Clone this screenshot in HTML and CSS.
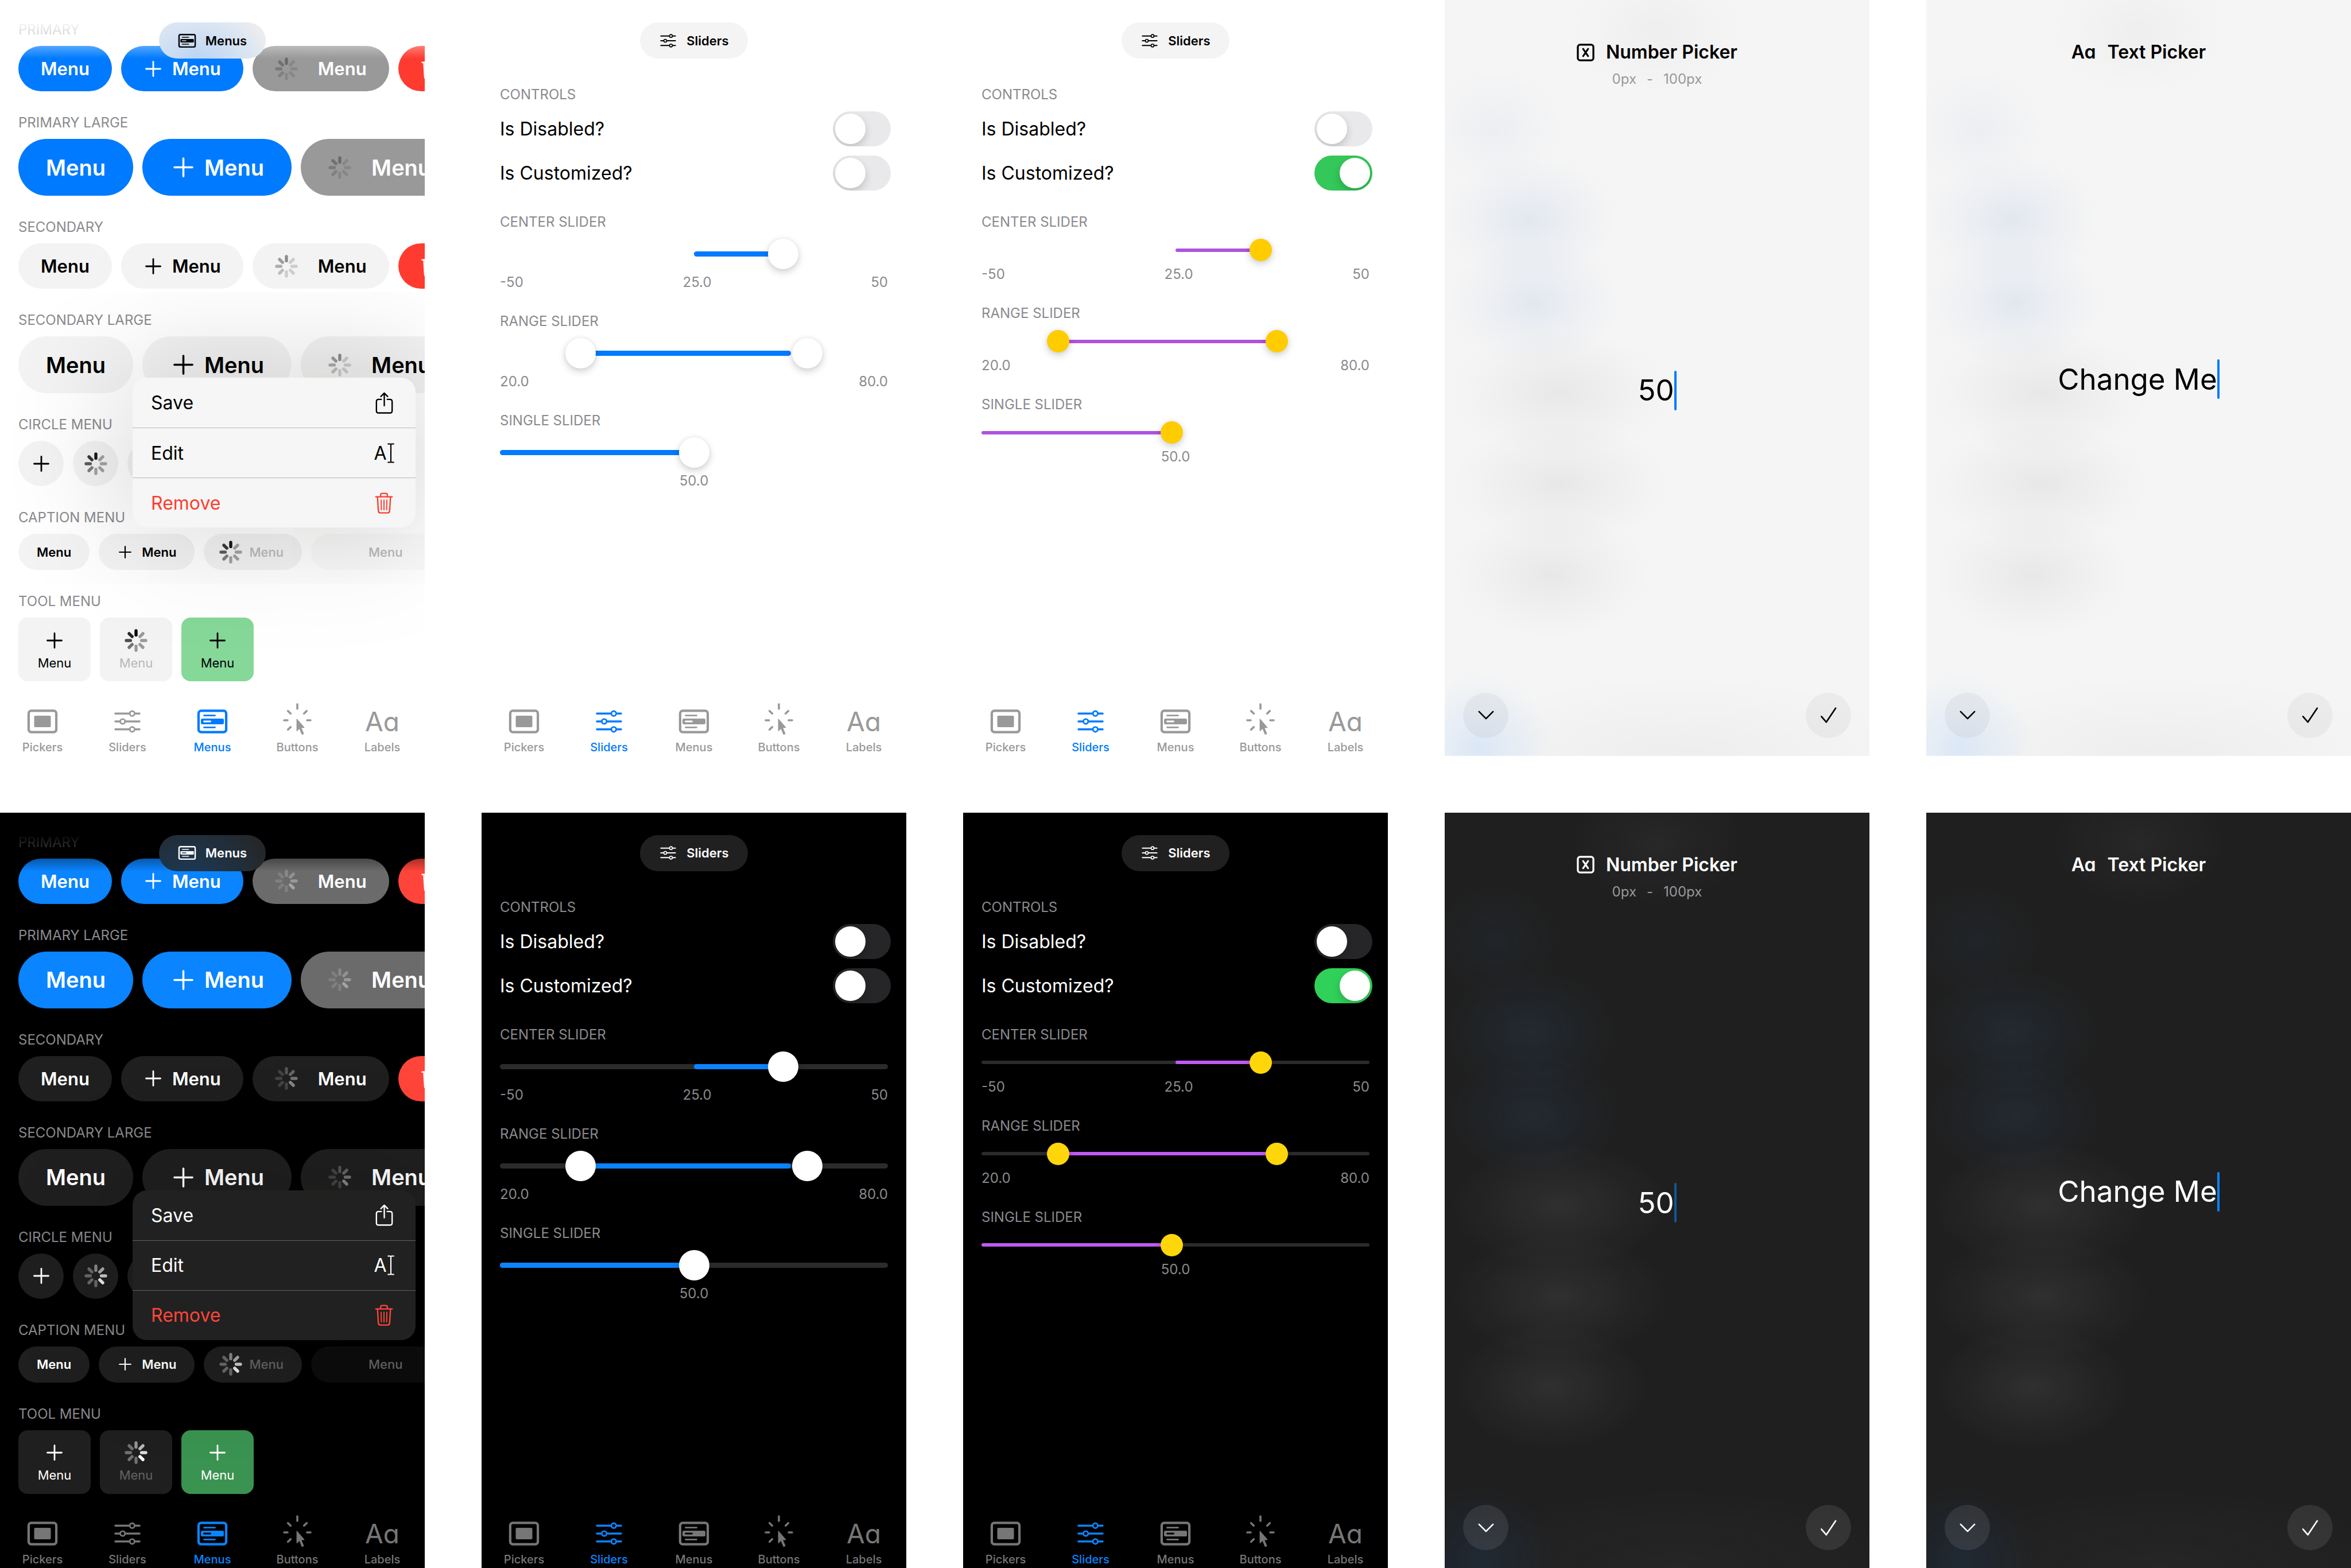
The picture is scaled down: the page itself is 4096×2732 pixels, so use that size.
FILE: index.html
```html
<!DOCTYPE html>
<html lang="en">
<head>
<meta charset="utf-8">
<meta name="viewport" content="width=device-width, initial-scale=1">
<title>Component gallery</title>
<link rel="stylesheet" href="styles.css">
</head>
<body>

<svg class="sprite" aria-hidden="true">
  <symbol id="plus" viewBox="0 0 28 28">
    <path d="M14 1.5v25M1.5 14h25" fill="none" stroke="currentColor" stroke-width="2.8" stroke-linecap="round"/>
  </symbol>
  <symbol id="spinner" viewBox="0 0 40 40">
    <g stroke="currentColor" stroke-width="5.4" stroke-linecap="round">
      <path d="M20 3v7.4"/>
      <path d="M20 3v7.4" transform="rotate(-45 20 20)" opacity=".84"/>
      <path d="M20 3v7.4" transform="rotate(-90 20 20)" opacity=".68"/>
      <path d="M20 3v7.4" transform="rotate(-135 20 20)" opacity=".52"/>
      <path d="M20 3v7.4" transform="rotate(180 20 20)" opacity=".36"/>
      <path d="M20 3v7.4" transform="rotate(135 20 20)" opacity=".36"/>
      <path d="M20 3v7.4" transform="rotate(90 20 20)" opacity=".36"/>
      <path d="M20 3v7.4" transform="rotate(45 20 20)" opacity=".36"/>
    </g>
  </symbol>
  <symbol id="trash" viewBox="0 0 32 38">
    <g fill="none" stroke="currentColor" stroke-width="2.4" stroke-linecap="round" stroke-linejoin="round">
      <path d="M1.4 7.800h29.200"/>
      <path d="M10 7.600V4.600Q10 1.600 13 1.600h6Q22 1.600 22 4.600V7.600"/>
      <path d="M4.400 8L5.900 33Q6.100 36.600 9.600 36.600H22.400Q25.900 36.600 26.100 33L27.600 8"/>
      <path d="M10.800 13.500L11.300 31M16 13.500V31M21.200 13.500L20.700 31" stroke-width="2"/>
    </g>
  </symbol>
  <symbol id="share" viewBox="0 0 32 40">
    <g fill="none" stroke="currentColor" stroke-width="2.5" stroke-linecap="round" stroke-linejoin="round">
      <path d="M10.500 13.600H5.600q-4 0-4 4v16.800q0 4 4 4h20.800q4 0 4-4V17.600q0-4-4-4h-4.900"/>
      <path d="M16 25V2M9.800 8.200L16 2l6.200 6.200"/>
    </g>
  </symbol>
  <symbol id="ibeam" viewBox="0 0 12 36">
    <path d="M1 1.500h3.500q1.500 0 1.500 1.500v30q0 1.500-1.500 1.500H1M11 1.500H7.500Q6 1.500 6 3M6 33q0 1.500 1.500 1.500H11" fill="none" stroke="currentColor" stroke-width="2.200" stroke-linecap="round"/>
  </symbol>
  <symbol id="pickers" viewBox="0 0 54 48">
    <rect x="2.900" y="5.400" width="48.200" height="37.200" rx="4.500" fill="none" stroke="currentColor" stroke-width="4.200"/>
    <rect x="12.500" y="14" width="29" height="20" rx="2" fill="currentColor"/>
  </symbol>
  <symbol id="sliders" viewBox="0 0 46 40">
    <g fill="none" stroke="currentColor" stroke-width="3.600" stroke-linecap="round">
      <path d="M2 6.200h24.600M36 6.200h8M2 20h8M19.400 20H44M2 33.800h24.600M36 33.800h8"/>
      <circle cx="31.300" cy="6.200" r="4.200" stroke-width="2.800"/>
      <circle cx="14.700" cy="20" r="4.200" stroke-width="2.800"/>
      <circle cx="31.300" cy="33.800" r="4.200" stroke-width="2.800"/>
    </g>
  </symbol>
  <symbol id="menus" viewBox="0 0 54 48">
    <rect class="menus-frame" x="2.900" y="5.400" width="48.200" height="37.200" rx="4.500" fill="none" stroke="currentColor" stroke-width="4.200"/>
    <path class="menus-frame" d="M12.500 13.700h19M12.500 34.300h19" stroke="currentColor" stroke-width="2.800" stroke-linecap="round"/>
    <path fill-rule="evenodd" fill="currentColor" d="M9.500 19h35q2.500 0 2.500 2.500v5q0 2.500-2.500 2.500h-35Q7 29 7 26.500v-5Q7 19 9.500 19zM12.500 22.600a1.400 1.400 0 0 0 0 2.800h11a1.400 1.400 0 0 0 0-2.800z"/>
  </symbol>
  <symbol id="buttons" viewBox="0 0 50 48">
    <path d="M25 -6v8M2 22h6M42 22h6M8.700 5.700l4.600 4.600M41.300 5.700l-4.600 4.600M8.700 38.300l4.600-4.600" fill="none" stroke="currentColor" stroke-width="3.600" stroke-linecap="round"/>
    <path d="M23.600 20.200q0-1.600 1.200-.5l12.300 14.200q1.100 1.200-.5 1.300l-4.300.2 4 9.300q.4 1.100-.6 1.600l-1.800.7q-1 .4-1.500-.7l-3.800-9.300-3.600 3.500q-1.400 1.200-1.400-.4z" fill="currentColor"/>
  </symbol>
  <symbol id="number" viewBox="0 0 32 32">
    <rect x="2" y="2" width="28" height="28" rx="4" fill="none" stroke="currentColor" stroke-width="3.400"/>
    <path d="M11.500 9.500l9 13M20.500 9.500l-9 13" stroke="currentColor" stroke-width="3.200" stroke-linecap="round"/>
  </symbol>
  <symbol id="chevron" viewBox="0 0 32 32">
    <path d="M3 9.500L16 22.500 29 9.500" fill="none" stroke="currentColor" stroke-width="2.800" stroke-linecap="round" stroke-linejoin="round"/>
  </symbol>
  <symbol id="check" viewBox="0 0 32 32">
    <path d="M2.500 18.500L11.500 29 29 3" fill="none" stroke="currentColor" stroke-width="2.800" stroke-linecap="round" stroke-linejoin="round"/>
  </symbol>
</svg>

<main class="board"></main>

<!-- Five screens; gallery.js places one set per theme. -->
<template id="screens">
  <article class="phone phone-menus" data-tab="menus">
    <header class="nav">
      <h2 class="nav-title"><svg class="nav-icon"><use href="#menus"/></svg>Menus</h2>
    </header>
    <div class="content">
      <section class="group">
        <h3 class="caption">PRIMARY</h3>
        <div class="row">
          <button class="btn primary">Menu</button>
          <button class="btn primary"><span class="glyph"><svg><use href="#plus"/></svg></span>Menu</button>
          <button class="btn primary loading"><svg class="spinner"><use href="#spinner"/></svg>Menu</button>
          <button class="btn danger" aria-label="Menu"><span class="glyph"><svg><use href="#trash"/></svg></span></button>
        </div>
      </section>
      <section class="group">
        <h3 class="caption">PRIMARY LARGE</h3>
        <div class="row">
          <button class="btn large primary">Menu</button>
          <button class="btn large primary"><span class="glyph"><svg><use href="#plus"/></svg></span>Menu</button>
          <button class="btn large primary loading"><svg class="spinner"><use href="#spinner"/></svg>Menu</button>
        </div>
      </section>
      <section class="group">
        <h3 class="caption">SECONDARY</h3>
        <div class="row">
          <button class="btn">Menu</button>
          <button class="btn"><span class="glyph"><svg><use href="#plus"/></svg></span>Menu</button>
          <button class="btn loading"><svg class="spinner"><use href="#spinner"/></svg>Menu</button>
          <button class="btn danger" aria-label="Menu"><span class="glyph"><svg><use href="#trash"/></svg></span></button>
        </div>
      </section>
      <section class="group">
        <h3 class="caption">SECONDARY LARGE</h3>
        <div class="row">
          <button class="btn large">Menu</button>
          <button class="btn large"><span class="glyph"><svg><use href="#plus"/></svg></span>Menu</button>
          <button class="btn large loading"><svg class="spinner"><use href="#spinner"/></svg>Menu</button>
        </div>
      </section>
      <section class="group">
        <h3 class="caption">CIRCLE MENU</h3>
        <div class="row">
          <button class="btn circle" aria-label="Menu"><span class="glyph"><svg><use href="#plus"/></svg></span></button>
          <button class="btn circle" aria-label="Loading"><svg class="spinner"><use href="#spinner"/></svg></button>
          <button class="btn circle" aria-label="Menu"></button>
        </div>
      </section>
      <section class="group">
        <h3 class="caption">CAPTION MENU</h3>
        <div class="row">
          <button class="btn small">Menu</button>
          <button class="btn small"><span class="glyph"><svg><use href="#plus"/></svg></span>Menu</button>
          <button class="btn small loading muted"><svg class="spinner"><use href="#spinner"/></svg><span>Menu</span></button>
          <button class="btn small faint muted"><span>Menu</span></button>
        </div>
      </section>
      <section class="group">
        <h3 class="caption">TOOL MENU</h3>
        <div class="row">
          <button class="tool"><span class="glyph"><svg><use href="#plus"/></svg></span>Menu</button>
          <button class="tool muted"><svg class="spinner"><use href="#spinner"/></svg><span>Menu</span></button>
          <button class="tool active"><span class="glyph"><svg><use href="#plus"/></svg></span>Menu</button>
        </div>
      </section>
    </div>
    <div class="popup" role="menu">
      <button class="popup-item" role="menuitem">Save<span class="popup-icon"><svg class="icon-share"><use href="#share"/></svg></span></button>
      <button class="popup-item" role="menuitem">Edit<span class="popup-icon">A<svg class="icon-ibeam"><use href="#ibeam"/></svg></span></button>
      <button class="popup-item remove" role="menuitem">Remove<span class="popup-icon"><svg class="icon-trash"><use href="#trash"/></svg></span></button>
    </div>
  </article>

  <article class="phone" data-tab="sliders">
    <header class="nav">
      <h2 class="nav-title"><svg class="nav-icon"><use href="#sliders"/></svg>Sliders</h2>
    </header>
    <div class="content content-sliders">
      <section class="group">
        <h3 class="caption">CONTROLS</h3>
        <label class="setting">Is Disabled?<input class="toggle" type="checkbox"></label>
        <label class="setting">Is Customized?<input class="toggle" type="checkbox"></label>
      </section>
      <section class="group">
        <h3 class="caption">CENTER SLIDER</h3>
        <div class="slider">
          <span class="fill fill-center"></span>
          <input type="range" min="-50" max="50" value="25" aria-label="Center slider">
        </div>
        <div class="values"><output>-50</output><output>25.0</output><output>50</output></div>
      </section>
      <section class="group">
        <h3 class="caption">RANGE SLIDER</h3>
        <div class="slider slider-range">
          <span class="fill fill-range"></span>
          <input type="range" value="20" aria-label="Range start">
          <input class="upper" type="range" value="80" aria-label="Range end">
        </div>
        <div class="values"><output>20.0</output><output>80.0</output></div>
      </section>
      <section class="group">
        <h3 class="caption">SINGLE SLIDER</h3>
        <div class="slider">
          <span class="fill fill-single"></span>
          <input type="range" value="50" aria-label="Single slider">
        </div>
        <div class="values values-single"><output>50.0</output></div>
      </section>
    </div>
  </article>

  <article class="phone" data-tab="sliders">
    <header class="nav">
      <h2 class="nav-title"><svg class="nav-icon"><use href="#sliders"/></svg>Sliders</h2>
    </header>
    <div class="content content-sliders customized">
      <section class="group">
        <h3 class="caption">CONTROLS</h3>
        <label class="setting">Is Disabled?<input class="toggle" type="checkbox"></label>
        <label class="setting">Is Customized?<input class="toggle" type="checkbox" checked></label>
      </section>
      <section class="group">
        <h3 class="caption">CENTER SLIDER</h3>
        <div class="slider">
          <span class="fill fill-center"></span>
          <input type="range" min="-50" max="50" value="25" aria-label="Center slider">
        </div>
        <div class="values"><output>-50</output><output>25.0</output><output>50</output></div>
      </section>
      <section class="group">
        <h3 class="caption">RANGE SLIDER</h3>
        <div class="slider slider-range">
          <span class="fill fill-range"></span>
          <input type="range" value="20" aria-label="Range start">
          <input class="upper" type="range" value="80" aria-label="Range end">
        </div>
        <div class="values"><output>20.0</output><output>80.0</output></div>
      </section>
      <section class="group">
        <h3 class="caption">SINGLE SLIDER</h3>
        <div class="slider">
          <span class="fill fill-single"></span>
          <input type="range" value="50" aria-label="Single slider">
        </div>
        <div class="values values-single"><output>50.0</output></div>
      </section>
    </div>
  </article>

  <article class="phone picker">
    <header class="picker-head">
      <h2 class="picker-title"><svg class="picker-icon"><use href="#number"/></svg>Number Picker</h2>
      <p class="picker-range"><span>0px</span><span>-</span><span>100px</span></p>
    </header>
    <div class="picker-field"><input class="entry" type="text" size="2" value="50" aria-label="Number"><span class="caret caret-number"></span></div>
    <footer class="picker-actions">
      <button class="round" aria-label="Dismiss"><svg><use href="#chevron"/></svg></button>
      <button class="round" aria-label="Confirm"><svg><use href="#check"/></svg></button>
    </footer>
  </article>

  <article class="phone picker">
    <header class="picker-head">
      <h2 class="picker-title"><span class="letters">Aa</span>Text Picker</h2>
    </header>
    <div class="picker-field"><input class="entry" type="text" size="9" value="Change Me" aria-label="Text"><span class="caret"></span></div>
    <footer class="picker-actions">
      <button class="round" aria-label="Dismiss"><svg><use href="#chevron"/></svg></button>
      <button class="round" aria-label="Confirm"><svg><use href="#check"/></svg></button>
    </footer>
  </article>
</template>

<template id="tabs">
  <nav class="tabs">
    <a class="tab" href="#pickers" data-name="pickers"><svg class="tab-wide"><use href="#pickers"/></svg>Pickers</a>
    <a class="tab" href="#sliders" data-name="sliders"><svg class="tab-sliders"><use href="#sliders"/></svg>Sliders</a>
    <a class="tab" href="#menus" data-name="menus"><svg class="tab-wide"><use href="#menus"/></svg>Menus</a>
    <a class="tab" href="#buttons" data-name="buttons"><svg class="tab-buttons"><use href="#buttons"/></svg>Buttons</a>
    <a class="tab" href="#labels" data-name="labels"><span class="tab-letters letters">Aa</span>Labels</a>
  </nav>
</template>

<script src="gallery.js"></script>
</body>
</html>
```
FILE: gallery.js
```js
// Renders every screen once per theme and adds the tab bar to tabbed screens.
const board = document.querySelector('.board');
const screens = document.getElementById('screens');
const tabs = document.getElementById('tabs');

for (const theme of ['light', 'dark']) {
  const set = document.createElement('section');
  set.className = `theme ${theme}`;
  set.append(screens.content.cloneNode(true));
  for (const phone of set.querySelectorAll('[data-tab]')) {
    phone.append(tabs.content.cloneNode(true));
    const current = phone.querySelector(`[data-name="${phone.dataset.tab}"]`);
    current.classList.add('current');
    current.setAttribute('aria-current', 'page');
  }
  board.append(set);
}
```
FILE: styles.css
```css
* { box-sizing: border-box; }

body {
  margin: 0;
  background: #fff;
  font-family: Inter, "Liberation Sans", sans-serif;
}

h2, h3, p { margin: 0; font-weight: inherit; }

button {
  border: 0;
  padding: 0;
  font: inherit;
  color: inherit;
  background: none;
}

svg { display: block; flex: none; overflow: visible; }

symbol { overflow: visible; }

.sprite { position: absolute; width: 0; height: 0; }

/* Themes */

.light {
  --bg: #fff;
  --bg-clear: rgba(255, 255, 255, 0);
  --text: #000;
  --label: #8a8a8e;
  --blue: #007aff;
  --red: #ff3b30;
  --green: #34c759;
  --loading: #999;
  --surface: #f3f3f3;
  --surface-faint: #fafafa;
  --muted: #b8b8b8;
  --tool-active: #86d899;
  --tab: #999;
  --nav: #f4f4f4;
  --nav-menus: radial-gradient(130px 100px at 35% 115%, #b8d3f4, #dbe6f2 75%, #ebecef);
  --popup: #f5f6f5;
  --popup-line: #b4b5b4;
  --track: transparent;
  --toggle: #e9e9eb;
  --knob-shadow: 0 5px 14px rgba(0, 0, 0, .18), 0 0 10px rgba(0, 0, 0, .06);
  --purple: #af52de;
  --yellow: #ffcc00;
  --sheet: #f5f5f5;
  --blob-blue: rgba(90, 130, 200, .12);
  --blob-blue-mid: rgba(90, 130, 200, .06);
  --blob-blue-strong: rgba(90, 165, 255, .16);
  --blob-gray: rgba(0, 0, 0, .055);
  --blob-gray-mid: rgba(0, 0, 0, .028);
  --blob-foot: rgba(0, 0, 0, .03);
  --round: rgba(0, 0, 0, .04);
  --spin-primary: rgba(0, 0, 0, .3);
  --spin-plain: rgba(0, 0, 0, .42);
  --spin-turn: 0deg;
}

.dark {
  --bg: #000;
  --bg-clear: rgba(0, 0, 0, 0);
  --text: #fff;
  --label: #8a8a8e;
  --blue: #0a84ff;
  --red: #ff453a;
  --green: #30d158;
  --loading: #6b6b6b;
  --surface: #1f1f1f;
  --surface-faint: #0c0c0c;
  --muted: #636363;
  --tool-active: #3a9350;
  --tab: #767676;
  --nav: #202020;
  --nav-menus: radial-gradient(140px 110px at 30% 110%, #1d3954, #222c35 75%, #242628);
  --popup: #212121;
  --popup-line: #606060;
  --track: #2b2b2d;
  --toggle: #262628;
  --knob-shadow: 0 4px 12px rgba(0, 0, 0, .2);
  --purple: #bf5af2;
  --yellow: #ffd60a;
  --sheet: #1f1f1f;
  --blob-blue: rgba(60, 110, 170, .13);
  --blob-blue-mid: rgba(60, 110, 170, .07);
  --blob-blue-strong: rgba(30, 80, 140, .18);
  --blob-gray: rgba(255, 255, 255, .075);
  --blob-gray-mid: rgba(255, 255, 255, .04);
  --blob-foot: rgba(255, 255, 255, .03);
  --round: rgba(255, 255, 255, .09);
  --spin-primary: rgba(255, 255, 255, .38);
  --spin-plain: rgba(255, 255, 255, .45);
  --spin-turn: 135deg;
}

/* Board */

.board {
  display: grid;
  grid-template-rows: 1fr 1fr;
  gap: 99px;
  min-height: 100vh;
}

.theme {
  display: grid;
  grid-template-columns: repeat(5, minmax(0, 1fr));
  gap: 99px;
  color: var(--text);
}

.phone {
  position: relative;
  display: flex;
  flex-direction: column;
  overflow: hidden;
  background: var(--bg);
}

/* Floating navigation title */

.nav {
  position: absolute;
  z-index: 1;
  top: 0;
  left: 0;
  right: 0;
  display: flex;
  justify-content: center;
  height: 102px;
  padding-top: 39px;
  background: linear-gradient(var(--bg) 35%, var(--bg-clear));
}

.nav-title {
  display: flex;
  align-items: center;
  gap: 16px;
  height: 63px;
  padding: 0 33px;
  border-radius: 32px;
  background: var(--nav);
  font-size: 22px;
  font-weight: 600;
}

.phone-menus .nav-title { background: var(--nav-menus); }

.nav-icon { width: 32px; height: 24px; }

.phone-menus .nav-icon { height: 28px; }

.nav .menus-frame { opacity: .6; }

/* Content groups */

.content {
  display: flex;
  flex-direction: column;
  gap: 42px;
  padding: 39px 32px 0;
}

.content-sliders { padding-top: 152px; }

.group { display: flex; flex-direction: column; gap: 15px; }

.content-sliders .group { gap: 16px; }

.caption {
  font-size: 24px;
  line-height: 26px;
  color: var(--label);
}

.row { display: flex; gap: 16px; }

/* Buttons */

.btn {
  display: flex;
  flex: none;
  align-items: center;
  justify-content: center;
  gap: 16px;
  height: 79px;
  padding: 0 39px;
  border-radius: 40px;
  background: var(--surface);
  font-size: 31px;
  font-weight: 600;
}

.btn.loading { gap: 35px; }

.btn.primary { background: var(--blue); color: #fff; }

.btn.primary.loading { background: var(--loading); }

.btn.danger { background: var(--red); color: #fff; }

.btn.large {
  height: 99px;
  padding: 0 48px;
  border-radius: 50px;
  font-size: 38px;
}

.btn.large:not(.loading) { gap: 14px; }

.btn.circle { width: 79px; padding: 0; }

.btn.small {
  height: 63px;
  padding: 0 32px;
  border-radius: 32px;
  font-size: 22px;
}

.btn.small.loading { gap: 12px; padding-left: 27px; }

.btn.faint { padding: 0 80px 0 100px; background: var(--surface-faint); }

.muted span { color: var(--muted); font-weight: 500; }

.glyph { display: flex; justify-content: center; width: 34px; }

.glyph svg { width: 28px; height: 28px; }

.danger .glyph svg { width: 32px; height: 38px; }

.large .glyph { width: 46px; }

.large .glyph svg { width: 35px; height: 35px; }

.small .glyph { width: 27px; }

.small .glyph svg { width: 22px; height: 22px; }

.spinner { width: 40px; height: 40px; transform: rotate(var(--spin-turn)); }

.btn .spinner { color: var(--spin-plain); }

.btn.primary .spinner { color: var(--spin-primary); }

.btn.circle .spinner, .btn.small .spinner { color: var(--text); opacity: .9; }

.tool {
  display: flex;
  flex-direction: column;
  align-items: center;
  justify-content: center;
  gap: 6px;
  width: 126px;
  height: 111px;
  border-radius: 16px;
  background: var(--surface);
  font-size: 22px;
  line-height: 26px;
}

.tool .glyph { align-items: center; height: 40px; }

.tool.muted span { font-weight: 400; }

.tool.active { background: var(--tool-active); }

/* Context menu */

.popup {
  position: absolute;
  top: 658px;
  right: 16px;
  width: 493px;
  border-radius: 25px;
  background: var(--popup);
  box-shadow: 0 0 200px 20px rgba(10, 10, 0, .17);
}

.popup-item {
  display: flex;
  align-items: center;
  justify-content: space-between;
  width: 100%;
  height: 87px;
  padding: 0 30px 0 32px;
  font-size: 32px;
}

.popup-item + .popup-item { border-top: 1px solid var(--popup-line); }

.popup-icon {
  display: flex;
  align-items: center;
  justify-content: center;
  gap: 1px;
  width: 50px;
}

.icon-share { width: 31px; height: 38px; }
.icon-ibeam { width: 12px; height: 35px; }
.icon-trash { width: 32px; height: 37px; }

.remove { color: var(--red); }

/* Settings */

.setting {
  display: flex;
  align-items: center;
  justify-content: space-between;
  margin-right: -5px;
  font-size: 32px;
}

.toggle {
  appearance: none;
  display: flex;
  width: 101px;
  height: 61px;
  margin: 0;
  padding: 4px;
  border-radius: 31px;
  background: var(--toggle);
  overflow: hidden;
}

.toggle::before {
  content: "";
  width: 53px;
  height: 53px;
  border-radius: 50%;
  background: #fff;
  box-shadow: 0 6px 14px rgba(0, 0, 0, .18);
}

.toggle:checked { justify-content: flex-end; background: var(--green); }

/* Sliders. A thumb travels the track less one slot per thumb. */

.content-sliders {
  --slot: 53px;
  --thumb: 53px;
  --rail: 9px;
  --tint: var(--blue);
  --knob: #fff;
}

.customized {
  --thumb: 39px;
  --rail: 6px;
  --tint: var(--purple);
  --knob: var(--yellow);
}

.slider {
  display: grid;
  align-items: center;
  height: var(--thumb);
}

.slider > * { grid-area: 1 / 1; }

.slider::before {
  content: "";
  grid-area: 1 / 1;
  height: var(--rail);
  border-radius: 5px;
  background: var(--track);
}

.fill {
  height: var(--rail);
  border-radius: 5px;
  background: var(--tint);
}

.fill-center { width: 22%; margin-left: 50%; }

.fill-range { margin: 0 25% 0 20%; }

.fill-single { width: 48%; }

.slider input {
  appearance: none;
  width: calc(100% - var(--slot) + var(--thumb));
  height: var(--thumb);
  margin: 0;
  background: none;
  pointer-events: none;
}

.slider-range input { width: calc(100% - 2 * var(--slot) + var(--thumb)); }

.slider-range .upper { margin-left: var(--thumb); }

.slider input::-webkit-slider-thumb {
  appearance: none;
  width: var(--thumb);
  height: var(--thumb);
  border-radius: 50%;
  background: var(--knob);
  box-shadow: var(--knob-shadow);
  pointer-events: auto;
}

.values {
  display: flex;
  justify-content: space-between;
  margin-top: -6px;
  font-size: 24px;
  line-height: 26px;
  color: var(--label);
}

.values-single { justify-content: center; }

/* Tab bar */

.tabs {
  display: grid;
  grid-template-columns: repeat(5, 1fr);
  margin-top: auto;
}

.tab {
  display: grid;
  grid-template-rows: 50px 24px;
  row-gap: 8px;
  place-items: center;
  padding-bottom: 3px;
  color: var(--tab);
  font-size: 20px;
  font-weight: 500;
  line-height: 24px;
  text-decoration: none;
}

.tab.current { color: var(--blue); }

.tab-wide { width: 54px; height: 48px; }
.tab-sliders { width: 46px; height: 40px; }
.tab-buttons { width: 50px; height: 48px; }
.tab-letters { font-size: 46px; font-weight: 400; line-height: 50px; }

/* Single-storey "a" */
.letters { font-feature-settings: "cv11"; }

/* Pickers */

.picker {
  background:
    radial-gradient(150px 110px at 50% 4%, var(--blob-gray-mid), transparent),
    radial-gradient(110px 100px at 12% 17%, var(--blob-blue-mid), transparent),
    radial-gradient(150px 110px at 20% 29%, var(--blob-blue), var(--blob-blue-mid) 45%, transparent),
    radial-gradient(150px 110px at 21% 40%, var(--blob-blue), var(--blob-blue-mid) 45%, transparent),
    radial-gradient(190px 110px at 27% 52%, var(--blob-gray), var(--blob-gray-mid) 45%, transparent),
    radial-gradient(190px 110px at 27% 64%, var(--blob-gray), var(--blob-gray-mid) 45%, transparent),
    radial-gradient(170px 110px at 25% 76%, var(--blob-gray), var(--blob-gray-mid) 45%, transparent),
    radial-gradient(130px 130px at 8% 99%, var(--blob-blue-strong), transparent),
    radial-gradient(420px 140px at 55% 100%, var(--blob-foot), transparent),
    var(--sheet);
}

.picker-head {
  display: flex;
  flex-direction: column;
  align-items: center;
  gap: 13px;
  padding: 70px 32px 3px;
}

.picker-title {
  display: flex;
  align-items: center;
  gap: 20px;
  font-size: 32px;
  font-weight: 600;
  line-height: 42px;
}

.picker-icon { width: 31px; height: 31px; }

.picker-range {
  display: flex;
  gap: 18px;
  font-size: 24px;
  line-height: 26px;
  color: #98989b;
}

.picker-field {
  display: flex;
  flex: 1;
  align-items: center;
  justify-content: center;
}

.entry {
  field-sizing: content;
  border: 0;
  padding: 0;
  background: none;
  font: 400 51px/64px Inter, "Liberation Sans", sans-serif;
  color: inherit;
}

.caret {
  width: 4px;
  height: 69px;
  border-radius: 2px;
  background: var(--blue);
}

.dark .caret-number { opacity: .55; }

.picker-actions {
  display: flex;
  justify-content: space-between;
  padding: 0 32px 31px;
}

.round {
  display: grid;
  place-items: center;
  width: 79px;
  height: 79px;
  border-radius: 50%;
  background: var(--round);
}

.round svg { width: 30px; height: 30px; }
```
